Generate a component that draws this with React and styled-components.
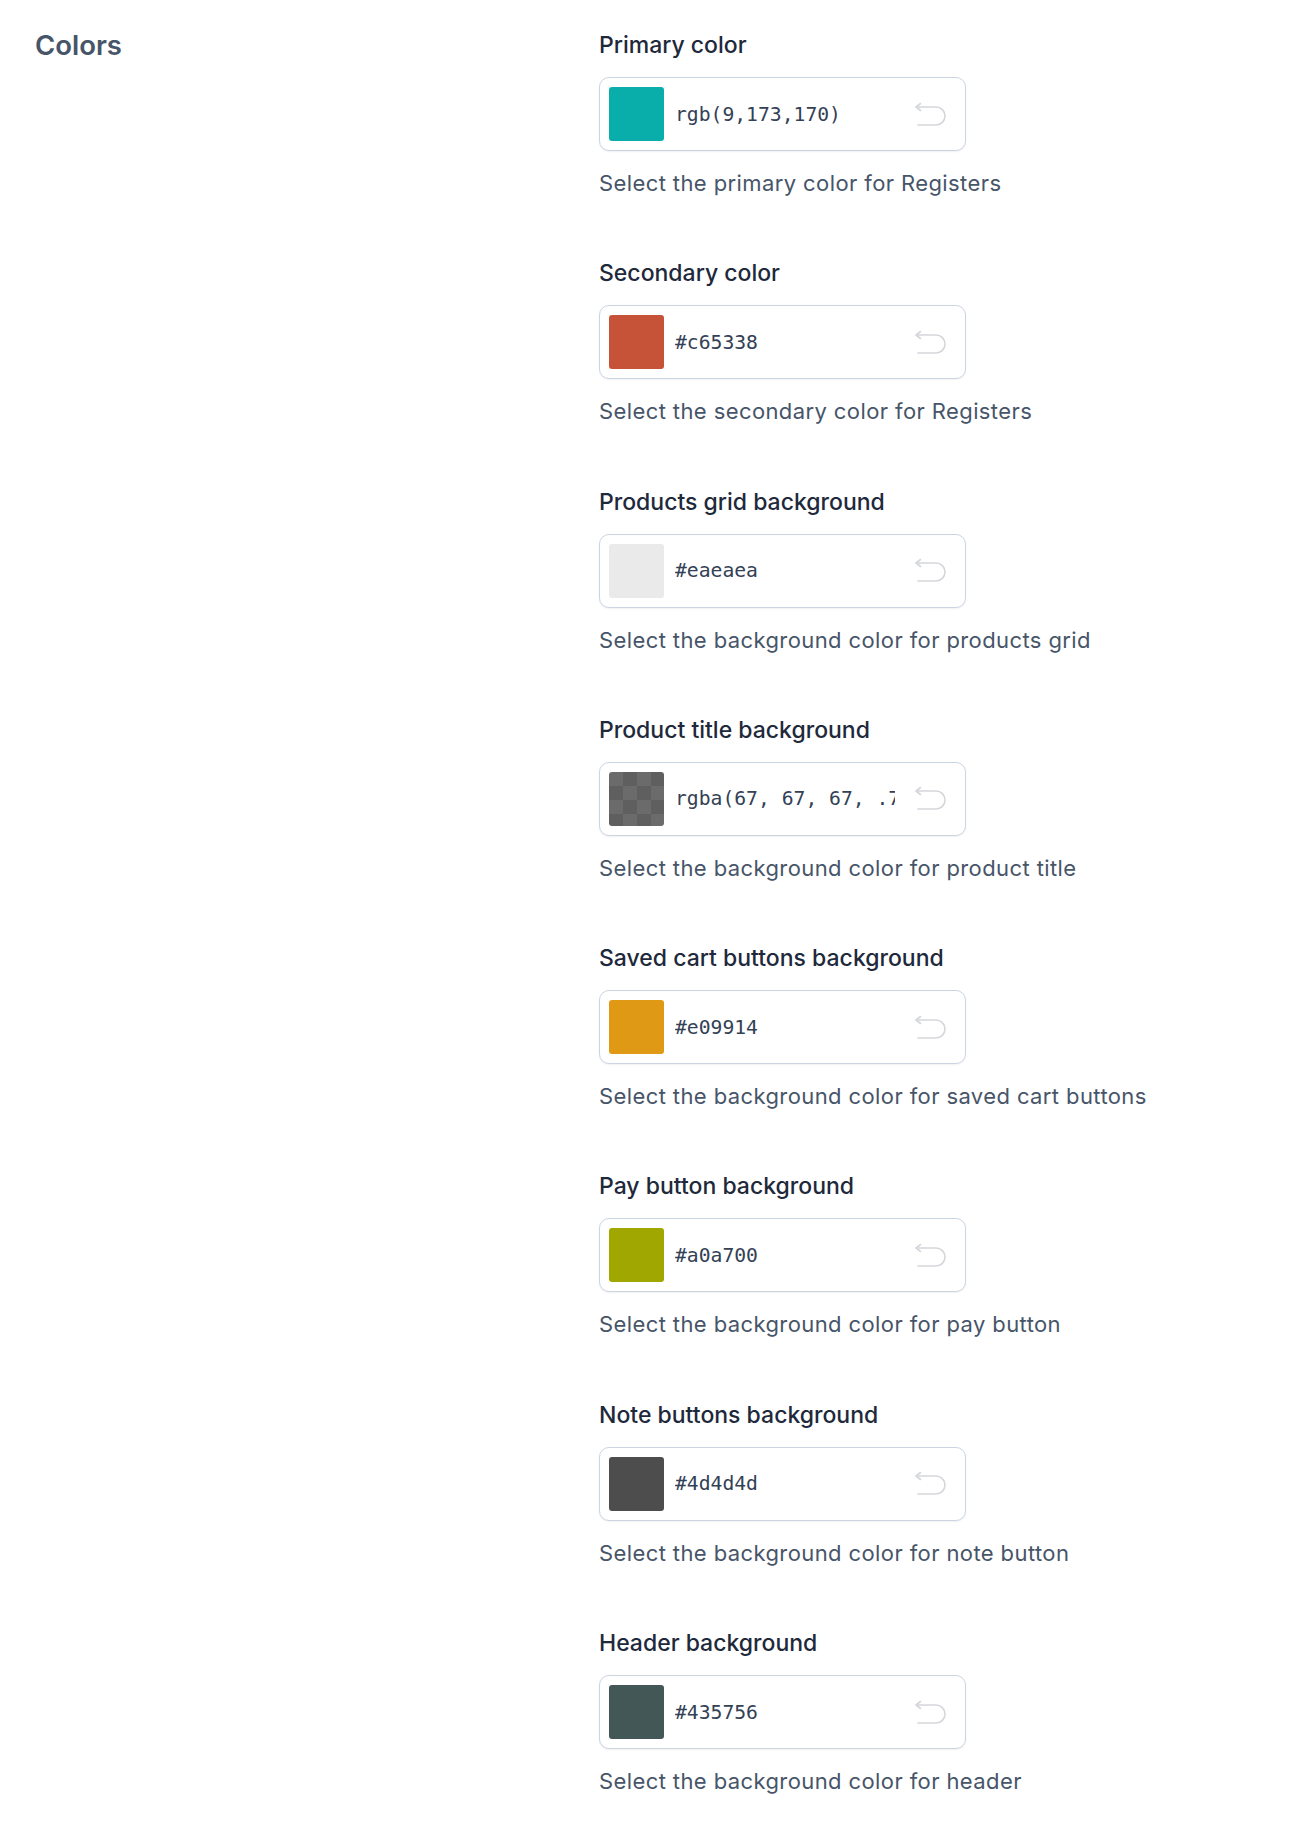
import React from 'react'
import styled, { createGlobalStyle } from 'styled-components'

const fields = [
  { label: 'Primary color', value: 'rgb(9,173,170)', swatch: '#09adaa', hint: 'Select the primary color for Registers' },
  { label: 'Secondary color', value: '#c65338', swatch: '#c65338', hint: 'Select the secondary color for Registers' },
  { label: 'Products grid background', value: '#eaeaea', swatch: '#eaeaea', hint: 'Select the background color for products grid' },
  { label: 'Product title background', value: 'rgba(67, 67, 67, .75)', swatch: 'rgba(67, 67, 67, .75)', checker: true, hint: 'Select the background color for product title' },
  { label: 'Saved cart buttons background', value: '#e09914', swatch: '#e09914', hint: 'Select the background color for saved cart buttons' },
  { label: 'Pay button background', value: '#a0a700', swatch: '#a0a700', hint: 'Select the background color for pay button' },
  { label: 'Note buttons background', value: '#4d4d4d', swatch: '#4d4d4d', hint: 'Select the background color for note button' },
  { label: 'Header background', value: '#435756', swatch: '#435756', hint: 'Select the background color for header' },
]

const UndoIcon = () => (
  <svg width="32" height="25" viewBox="0 0 32 25" fill="none" stroke="#d4d6da" strokeWidth="1.6" strokeLinecap="round" strokeLinejoin="round">
    <path d="M6.5 1.5 2 5 6.5 8.5" />
    <path d="M2.5 5h19.5a9 9 0 0 1 0 18H4" />
  </svg>
)

const App = () => {
  return (
    <>
      <GlobalStyle />
      <Page>
        <Title>Colors</Title>
        <Fields>
          {fields.map((f) => (
            <Field key={f.label}>
              <Label>{f.label}</Label>
              <Picker>
                <Swatch $color={f.swatch} $checker={f.checker} />
                <Value>{f.value}</Value>
                <ResetButton type="button" aria-label="Reset">
                  <UndoIcon />
                </ResetButton>
              </Picker>
              <Hint>{f.hint}</Hint>
            </Field>
          ))}
        </Fields>
      </Page>
    </>
  )
}

export default App

const GlobalStyle = createGlobalStyle`
  body {
    margin: 0;
    background: #ffffff;
    font-family: Inter, "Noto Sans", sans-serif;
  }
`

const Page = styled.div`
  display: grid;
  grid-template-columns: 564px 1fr;
  padding: 30px 0 40px 35px;
`

const Title = styled.h2`
  margin: 0;
  font-size: 27.5px;
  line-height: 30px;
  font-weight: 600;
  color: #475569;
`

const Fields = styled.div`
  display: flex;
  flex-direction: column;
  gap: 60.3px;
`

const Field = styled.div`
  display: flex;
  flex-direction: column;
`

const Label = styled.div`
  font-size: 23px;
  line-height: 30px;
  font-weight: 500;
  color: #1e293b;
`

const Picker = styled.div`
  box-sizing: border-box;
  width: 367px;
  height: 74px;
  margin: 17px 0;
  display: flex;
  align-items: center;
  padding: 0 19px 0 9px;
  border: 1px solid #cbd5e1;
  border-radius: 10px;
  background: #fff;
  box-shadow: 0 1px 2px rgba(15, 23, 42, 0.06);
`

const Swatch = styled.div`
  flex: none;
  width: 55px;
  height: 54px;
  border-radius: 3px;
  background: ${(p) => p.$color};
  ${(p) =>
    p.$checker &&
    `
    background: conic-gradient(#5f5f5f 25%, #6b6b6b 0 50%, #5f5f5f 0 75%, #6b6b6b 0) 0 0 / 28px 28px;
  `}
`

const Value = styled.div`
  flex: 1;
  min-width: 0;
  margin-left: 11px;
  overflow: hidden;
  white-space: nowrap;
  font-family: "DejaVu Sans Mono", "Liberation Mono", monospace;
  font-size: 19.7px;
  color: #334155;
`

const ResetButton = styled.button`
  flex: none;
  display: flex;
  padding: 0;
  margin-left: 19px;
  border: none;
  background: none;
`

const Hint = styled.div`
  font-size: 22px;
  line-height: 30px;
  color: #475569;
  letter-spacing: 0.4px;
`
